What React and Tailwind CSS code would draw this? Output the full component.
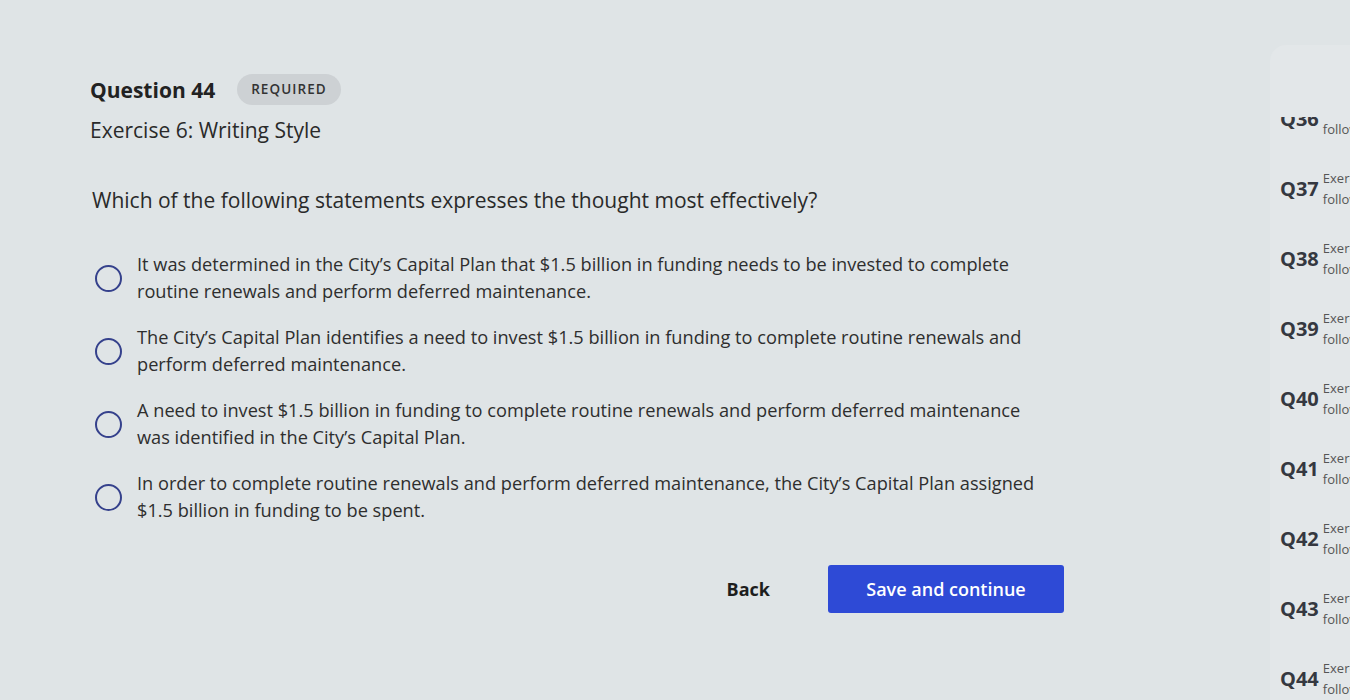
import React, { useState } from 'react';

const options = [
  "It was determined in the City’s Capital Plan that $1.5 billion in funding needs to be invested to complete routine renewals and perform deferred maintenance.",
  "The City’s Capital Plan identifies a need to invest $1.5 billion in funding to complete routine renewals and perform deferred maintenance.",
  "A need to invest $1.5 billion in funding to complete routine renewals and perform deferred maintenance was identified in the City’s Capital Plan.",
  "In order to complete routine renewals and perform deferred maintenance, the City’s Capital Plan assigned $1.5 billion in funding to be spent.",
];

const nav = [36, 37, 38, 39, 40, 41, 42, 43, 44];

export default function App() {
  const [picked, setPicked] = useState(null);
  return (
    <div className="w-[1350px] h-[700px] overflow-hidden flex bg-[#dfe4e6] text-[#262626] font-['Open_Sans','Liberation_Sans',sans-serif]">
      <main className="flex-1 pl-[90px] pt-[74px]">
        <div className="flex items-center gap-[22px]">
          <h2 className="text-[21px] leading-[28px] font-bold text-[#222]">Question 44</h2>
          <span className="h-[31px] px-[14px] flex items-center rounded-full bg-[#cdd1d4] text-[13.5px] font-semibold tracking-[0.08em] text-[#333]">REQUIRED</span>
        </div>
        <p className="mt-[11px] text-[21px] leading-[28px] text-[#2a2a2a]">Exercise 6: Writing Style</p>
        <p className="mt-[42px] ml-[2px] text-[21px] leading-[28px] text-[#2a2a2a]">Which of the following statements expresses the thought most effectively?</p>
        <div className="mt-[37px] flex flex-col gap-[19px]">
          {options.map((o, i) => (
            <label key={i} className="flex items-center cursor-pointer" onClick={() => setPicked(i)}>
              <span className="ml-[5px] w-[27px] h-[27px] rounded-full border-[2.5px] border-[#35418c] flex items-center justify-center shrink-0">
                {picked === i && <span className="w-[12px] h-[12px] rounded-full bg-[#35418c]" />}
              </span>
              <span className="ml-[15px] max-w-[910px] text-[18.2px] leading-[27px] text-[#2e2e2e]">{o}</span>
            </label>
          ))}
        </div>
        <div className="mt-[41px] w-[974px] flex items-center justify-end gap-[34px]">
          <button className="px-6 text-[18px] font-bold text-[#1e1e1e]">Back</button>
          <button className="w-[236px] h-[48px] rounded-[3px] bg-[#2e4ad6] text-white text-[18px] font-semibold">Save and continue</button>
        </div>
      </main>
      <aside className="w-[80px] mt-[45px] rounded-tl-[16px] bg-[#e3e7e9] pt-[72px] flex flex-col">
        <div className="flex-1 overflow-hidden">
          <div className="-mt-[33px]">
            {nav.map(n => (
              <div key={n} className="h-[70px] flex items-center">
                <span className="ml-[10px] w-[62px] text-center text-[20px] font-bold text-[#353840]">Q{n}</span>
                <div className="ml-[4px] text-[13px] leading-[21px] text-[#555] whitespace-nowrap">
                  <div>Exercise 6:</div>
                  <div>following</div>
                </div>
              </div>
            ))}
          </div>
        </div>
      </aside>
    </div>
  );
}
